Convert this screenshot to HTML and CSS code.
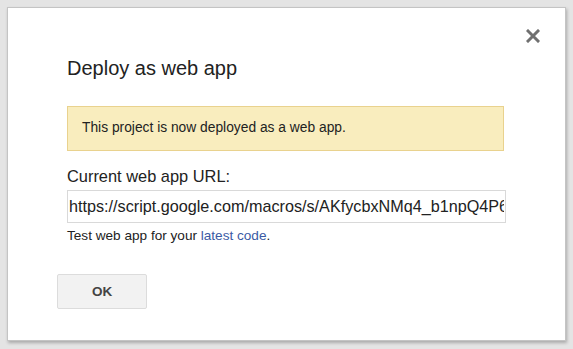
FILE: index.html
```html
<!DOCTYPE html>
<html lang="en">
<head>
    <meta charset="UTF-8">
    <meta name="viewport" content="width=device-width, initial-scale=1.0">
    <title>Deploy as web app</title>
    <link rel="stylesheet" href="styles.css">
</head>
<body>
    <div class="dialog">
        <a href="#" class="close-btn" aria-label="Close">
            <svg width="14" height="14" viewBox="0 0 14 14">
                <path d="M2 2 L12 12 M12 2 L2 12" stroke="#707070" stroke-width="3" stroke-linecap="square"/>
            </svg>
        </a>
        <h1 class="dialog-title">Deploy as web app</h1>

        <div class="notice">This project is now deployed as a web app.</div>

        <label class="url-label" for="url">Current web app URL:</label>
        <input class="url-input" id="url" type="text" readonly
               value="https://script.google.com/macros/s/AKfycbxNMq4_b1npQ4P6vZ1kYhQ0mT3xq8aGcLp2/exec">
        <p class="hint">Test web app for your <a href="#">latest code</a>.</p>

        <div class="action-buttons">
            <button class="btn">OK</button>
        </div>
    </div>
</body>
</html>
```

FILE: styles.css
```css
* {
    margin: 0;
    padding: 0;
    box-sizing: border-box;
    font-family: "Liberation Sans", Arial, sans-serif;
}
body {
    background-color: #e4e4e4;
    padding: 7px 7px 0 7px;
    height: 349px;
    overflow: hidden;
}
.dialog {
    background-color: white;
    width: 559px;
    height: 334px;
    border: 1px solid #c4c4c4;
    box-shadow: 1px 2px 3px rgba(0,0,0,0.25);
    position: relative;
    padding: 47px 57px 0 59px;
}
.close-btn {
    position: absolute;
    top: 21px;
    right: 25px;
    display: block;
    width: 14px;
    height: 14px;
}
.close-btn svg {
    display: block;
}
.dialog-title {
    font-size: 20px;
    font-weight: normal;
    color: #222;
    line-height: 26px;
    margin-bottom: 25px;
}
.notice {
    background-color: #f9edbe;
    border: 1px solid #e9d28e;
    color: #222;
    font-size: 13.8px;
    line-height: 16px;
    padding: 13px 14px 14px;
    width: 437px;
}
.url-label {
    display: block;
    font-size: 16.4px;
    color: #222;
    line-height: 20px;
    margin-top: 15px;
}
.url-input {
    display: block;
    width: 439px;
    height: 33px;
    margin-top: 4px;
    border: 1px solid #d9d9d9;
    padding: 0 1px;
    font-size: 16.2px;
    color: #222;
    outline: none;
}
.hint {
    font-size: 13.6px;
    color: #222;
    line-height: 16px;
    margin-top: 5px;
}
.hint a {
    color: #3b5aa4;
    text-decoration: none;
}
.action-buttons {
    margin-top: 30px;
    margin-left: -10px;
}
.btn {
    width: 90px;
    height: 35px;
    background-color: #f2f2f2;
    border: 1px solid #dcdcdc;
    border-radius: 2px;
    color: #444;
    font-size: 13.5px;
    font-weight: bold;
    cursor: pointer;
}
```
